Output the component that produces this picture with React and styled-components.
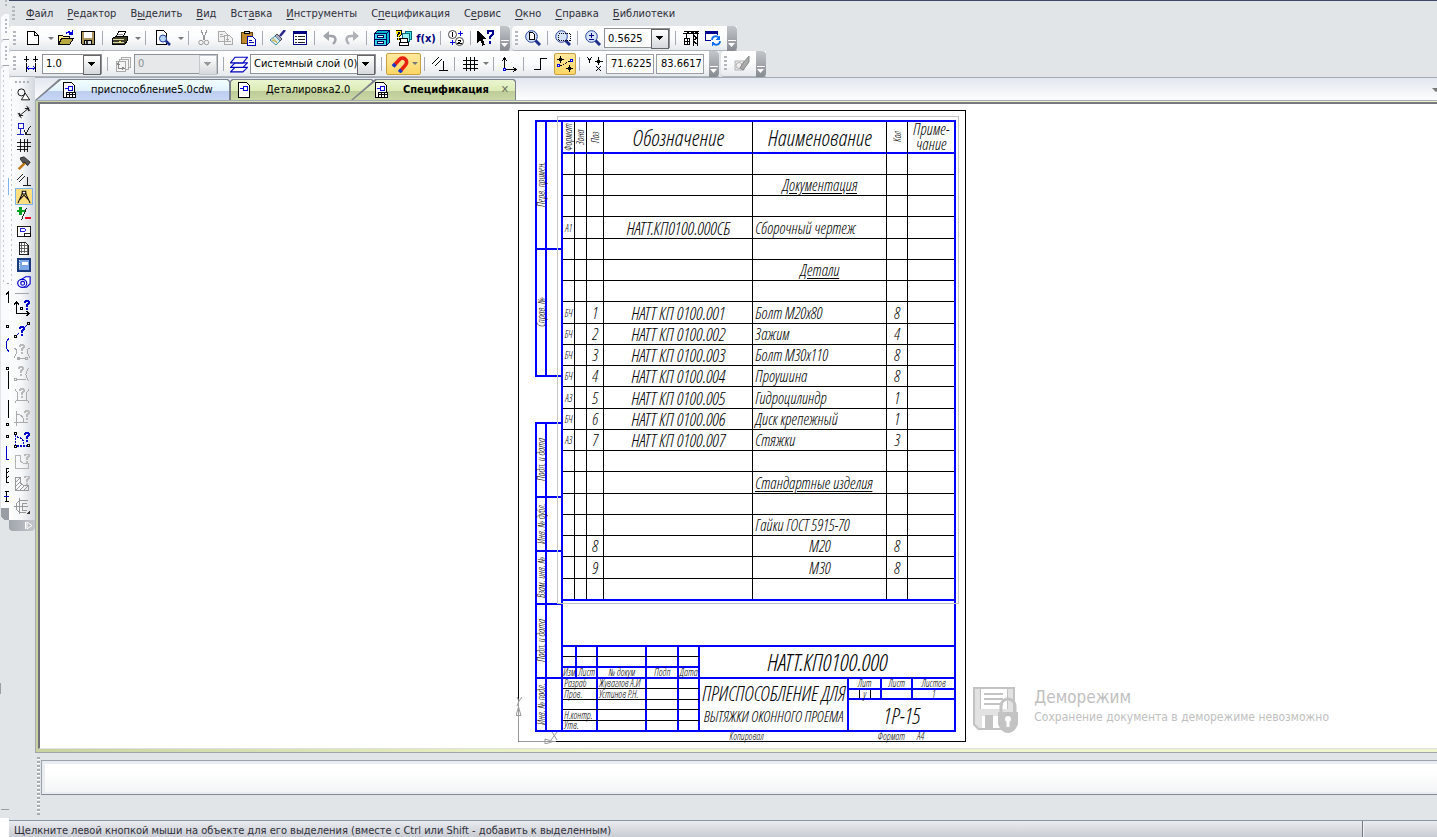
import React from 'react';
import styled, { createGlobalStyle, css } from 'styled-components';

const uiFont = '"DejaVu Sans Condensed", "DejaVu Sans", Tahoma, sans-serif';
const sheetFont = '"Open Sans Condensed Light", "Open Sans Condensed", "Liberation Sans Narrow", sans-serif';
const blue = '#0000ff';
const chrome = '#e1e5e8';

const GlobalStyle = createGlobalStyle`
  * { box-sizing: border-box; }
  body {
    margin: 0;
    background: ${chrome};
    font-family: ${uiFont};
    font-size: 11px;
    color: #2e2e38;
  }
  button, input, select { font: inherit; color: inherit; }
  button { padding: 0; border: 0; background: none; }
`;

const Window = styled.div`
  display: flex;
  min-height: 100vh;
  background: ${chrome};
`;

const Behind = styled.aside`
  flex: none;
  width: 9px;
  overflow: hidden;
  svg { display: block; }
`;

const Main = styled.div`
  flex: 1;
  min-width: 0;
  display: flex;
  flex-direction: column;
  border-top: 1px solid #3c4666;
`;

const Grip = styled.span`
  flex: none;
  width: 3px;
  height: 15px;
  margin: 0 4px 0 3px;
  background: repeating-linear-gradient(#b4b8be 0 2px, transparent 2px 4px);
`;

const MenuBar = styled.nav`
  display: flex;
  align-items: center;
  height: 25px;
`;

const MenuItem = styled.button`
  padding: 0 7px;
  line-height: 24px;
  u { text-underline-offset: 2px; }
`;

const ToolRow = styled.div`
  display: flex;
  gap: 2px;
  height: ${({ $tall }) => $tall ? 26 : 25}px;
`;

const ToolGroup = styled.div`
  display: flex;
  align-items: center;
  padding-left: ${({ $first }) => $first ? 1 : 0}px;
  border-bottom: 1px solid #b0b6be;
  border-radius: 4px 0 0 3px;
  background: linear-gradient(#fff, #fafbfc 50%, #e6e9ed);
`;

const ToolButton = styled.button`
  flex: none;
  display: flex;
  align-items: center;
  justify-content: center;
  width: ${({ $wide }) => $wide ? 26 : 22}px;
  height: 22px;
  ${({ $on }) => $on && css`
    border: 1px solid #c8a040;
    border-radius: 2px;
    background: linear-gradient(#ffe9a0, #ffd665);
  `}
`;

const MagnetButton = styled(ToolButton)`
  width: 35px;
  gap: 3px;
  justify-content: flex-end;
  padding-right: 2px;
`;

const Arrow = styled.i`
  flex: none;
  width: 0;
  border: 3px solid transparent;
  border-top-color: #777;
  border-bottom: 0;
`;

const DropButton = styled.button`
  flex: none;
  display: flex;
  justify-content: center;
  width: 9px;
`;

const Separator = styled.span`
  flex: none;
  width: 1px;
  height: 14px;
  margin: 0 4px 0 3px;
  background: #a4a9b2;
`;

const Handle = styled.span`
  flex: none;
  align-self: stretch;
  display: flex;
  align-items: flex-end;
  justify-content: center;
  width: 10px;
  margin: 0 0 -1px 3px;
  padding-bottom: 3px;
  border-radius: 0 4px 4px 0;
  background: linear-gradient(#c3c6ca, #868a91);
`;

const Combo = styled.span`
  flex: none;
  display: flex;
  width: ${({ $width }) => $width}px;
  height: 20px;
  margin-right: 2px;
  border: 1px solid #8d9299;
  background: ${({ $off }) => $off ? '#e6e8ea' : '#fff'};
  color: ${({ $off }) => $off ? '#8a8e94' : '#000'};
  position: relative;
  select {
    flex: 1;
    width: 100%;
    padding: 0 14px 0 3px;
    border: 0;
    background: none;
    color: inherit;
    opacity: 1;
    appearance: none;
  }
  &::after {
    content: '';
    position: absolute;
    right: 0;
    top: 0;
    width: 16px;
    height: 18px;
    border: 1px solid ${({ $off }) => $off ? '#c4c7cb' : '#666'};
    background:
      linear-gradient(${({ $off }) => $off ? '#999, #999' : '#000, #000'}) 4px 6px / 7px 1px no-repeat,
      linear-gradient(${({ $off }) => $off ? '#999, #999' : '#000, #000'}) 5px 7px / 5px 1px no-repeat,
      linear-gradient(${({ $off }) => $off ? '#999, #999' : '#000, #000'}) 6px 8px / 3px 1px no-repeat,
      linear-gradient(${({ $off }) => $off ? '#999, #999' : '#000, #000'}) 7px 9px / 1px 1px no-repeat,
      linear-gradient(#fff, #d5d8dc);
    pointer-events: none;
  }
`;

const Coord = styled.input`
  width: 48px;
  height: 20px;
  margin-right: 2px;
  padding: 0 2px 0 4px;
  border: 1px solid #9a9fa6;
  background: #fff;
  color: #000;
`;

const Body = styled.div`
  flex: 1;
  display: flex;
`;

const Palette = styled.div`
  flex: none;
  width: 26px;
`;

const PaletteTools = styled.div`
  display: flex;
  flex-direction: column;
  align-items: flex-end;
  padding: 9px 0 3px;
  border-radius: 4px 4px 0 0;
  background:
    repeating-linear-gradient(90deg, #b0b4ba 0 2px, transparent 2px 4px) 6px 4px / 14px 2px no-repeat,
    repeating-linear-gradient(#c4c7cc 0 2px, transparent 2px 5px) 2px 12px / 1px 196px no-repeat,
    linear-gradient(90deg, #fff, #f4f6f8 50%, #d3d8de);
  hr {
    width: 14px;
    margin: 3px 6px;
    border: 0;
    border-top: 1px solid #a0a5ad;
  }
`;

const PaletteButton = styled.button`
  display: flex;
  align-items: center;
  justify-content: center;
  width: ${({ $big }) => $big ? 25 : 21}px;
  height: ${({ $big }) => $big ? 22 : 17}px;
  padding-right: 2px;
  ${({ $on }) => $on && css`
    width: 18px;
    margin-right: 2px;
    padding: 0;
    border: 1px solid #7fb4ea;
    background: #ffdf80;
  `}
`;

const PaletteFoot = styled.div`
  height: 11px;
  padding-left: 15px;
  border-radius: 0 0 4px 4px;
  background: linear-gradient(90deg, #a0a4ab, #c4c8ce);
  svg { display: block; }
`;

const Work = styled.div`
  flex: 1;
  min-width: 0;
  display: flex;
  flex-direction: column;
`;

const TabRow = styled.div`
  display: flex;
  align-items: flex-end;
  height: 24px;
  border-top: 1px solid #a3aab4;
  border-bottom: 1px solid #a3aab4;
  background: linear-gradient(#e3e7ef, #fcfdfe);
  overflow: hidden;
  & > i { margin: 0 -3px 8px auto; border-width: 4px 4px 0; }
`;

const slant = 'polygon(24px 0, calc(100% - 2px) 0, 100% 2px, 100% 100%, 0 100%)';
const straight = 'polygon(2px 0, calc(100% - 2px) 0, 100% 2px, 100% 100%, 0 100%, 0 2px)';

const Tab = styled.button`
  position: relative;
  z-index: 0;
  flex: none;
  display: flex;
  align-items: center;
  width: ${({ $width }) => $width}px;
  height: 21px;
  margin-left: ${({ $over }) => $over || 0}px;
  padding: 0 7px 0 ${({ $pad }) => $pad}px;
  color: #000;
  font-weight: ${({ $active }) => $active ? 'bold' : 'normal'};
  svg { flex: none; margin-right: 14px; }
  span { margin-left: auto; color: #6d7364; font-weight: normal; }
  &::before, &::after {
    content: '';
    position: absolute;
    z-index: -1;
    inset: 0;
    background: #7c828b;
    clip-path: ${({ $slant }) => $slant ? slant : straight};
  }
  &::after {
    inset: 1px 1px 0 ${({ $slant }) => $slant ? 2 : 1}px;
    background: ${({ $green }) => $green
      ? 'linear-gradient(#eaf5d0, #dcebb4 55%, #bccb98 55%, #c9d8a4)'
      : 'linear-gradient(#f2ffff, #e2f2fd 55%, #bccdf0 55%, #c8d6f4)'};
  }
`;

const CanvasFrame = styled.div`
  flex: 1;
  display: flex;
  padding: 1px 0 3px 2px;
  border-left: 1px solid #a3aab4;
  border-bottom: 1px solid #a0a6ac;
  background: linear-gradient(90deg, #c8d3a0, #eef5cc 40%);
`;

const Canvas = styled.main`
  position: relative;
  flex: 1;
  display: flex;
  justify-content: center;
  align-items: flex-start;
  padding: 6px 0 6px 7px;
  border-left: 2px solid #707078;
  border-top: 2px solid #77777f;
  border-bottom: 1px solid #dfe0e4;
  background: #fff;
`;

const Sheet = styled.article`
  position: relative;
  width: 448px;
  padding: 9px 9px 0 16px;
  border: 1px solid #000;
  background: #fff;
  color: #000;
  font-family: ${sheetFont};
  font-style: italic;
  font-weight: 300;
`;

const Frame = styled.div`
  display: flex;
`;

const Strips = styled.div`
  flex: none;
  width: 26px;
`;

const Strip = styled.div`
  border-top: 2px solid ${blue};
  border-left: 2px solid ${blue};
  margin-bottom: 45px;
  &:last-child { margin-bottom: 0; }
`;

const StripCell = styled.div`
  display: flex;
  height: ${({ $height }) => $height}px;
  border-bottom: 2px solid ${blue};
  span {
    display: flex;
    align-items: center;
    justify-content: center;
    width: 10px;
    line-height: 8px;
    font-size: 10px;
    white-space: nowrap;
    writing-mode: vertical-rl;
    text-orientation: sideways;
    transform: rotate(180deg);
    border-left: 2px solid ${blue};
  }
`;

const Form = styled.div`
  flex: 1;
  border: 2px solid ${blue};
`;

const Spec = styled.table`
  width: 100%;
  table-layout: fixed;
  border-spacing: 0;
  font-size: 16px;
  border-bottom: 2px solid ${blue};
  th, td {
    padding: 0;
    line-height: 18px;
    white-space: nowrap;
    text-align: center;
    border-right: 1px solid #000;
    &:last-child { border-right: 0; }
  }
  th {
    height: 32px;
    font-weight: 300;
    border-bottom: 2px solid ${blue};
  }
  td {
    height: 21px;
    border-bottom: 1px solid #000;
  }
  tbody tr:nth-child(4n) td { height: 22px; }
  tbody tr:last-child td { height: 20px; border-bottom: 0; }
  td:first-child { font-size: 10px; }
  td:nth-child(4) { font-size: 18px; }
`;

const HeadText = styled.span`
  display: block;
  font-size: ${({ $big }) => $big ? 22 : 16}px;
  line-height: ${({ $big }) => $big ? 28 : 15}px;
`;

const Upright = styled.span`
  display: block;
  width: 11px;
  height: 30px;
  margin: 0 auto;
  font-size: 10px;
  line-height: 11px;
  text-align: center;
  writing-mode: vertical-rl;
  transform: rotate(180deg);
`;

const Name = styled.span`
  display: block;
  padding: 0 2px;
  text-align: ${({ $center }) => $center ? 'center' : 'left'};
  text-decoration: ${({ $under }) => $under ? 'underline' : 'none'};
  text-underline-offset: 2px;
`;

const Blank = styled.div`
  height: 44px;
`;

const Stamp = styled.div`
  display: flex;
  border-top: 2px solid ${blue};
`;

const Signatures = styled.table`
  width: 137px;
  table-layout: fixed;
  border-spacing: 0;
  td, th {
    height: 10px;
    padding: 0 0 0 1px;
    font-size: 10px;
    line-height: 9px;
    font-weight: 300;
    text-align: left;
    white-space: nowrap;
    border-right: 2px solid ${blue};
    border-bottom: 1px solid #000;
  }
  th { text-align: center; padding: 0; }
  tr.main td, tr.main th { height: 11px; border-bottom: 2px solid ${blue}; }
  tr.last td { height: 9px; border-bottom: 0; }
  tr.tall td { height: 11px; }
`;

const Titles = styled.div`
  flex: 1;
`;

const Code = styled.div`
  height: 32px;
  line-height: 30px;
  font-size: 24px;
  text-align: center;
  border-bottom: 2px solid ${blue};
`;

const TitleRow = styled.div`
  display: flex;
  height: 51px;
`;

const Title = styled.div`
  flex: none;
  width: 149px;
  padding-top: 4px;
  border-right: 2px solid ${blue};
  text-align: center;
  white-space: nowrap;
  line-height: 22px;
  font-size: 20px;
  small { display: block; font-size: 15px; }
`;

const SheetNo = styled.div`
  flex: 1;
  font-size: 22px;
  line-height: 31px;
  text-align: center;
`;

const Triple = styled.div`
  display: grid;
  grid-template-columns: 33px 31px 1fr;
  height: ${({ $low }) => $low ? 10 : 11}px;
  border-bottom: 2px solid ${blue};
  font-size: 10px;
  line-height: 9px;
  span { border-right: 2px solid ${blue}; }
  span:last-child { border-right: 0; }
  b {
    display: block;
    width: 12px;
    height: 8px;
    margin: 0 auto;
    border: 1px solid #000;
    border-width: 0 1px;
    font-weight: 300;
    line-height: 8px;
  }
`;

const SheetFoot = styled.footer`
  display: flex;
  justify-content: flex-end;
  height: 9px;
  padding-right: 32px;
  font-size: 10px;
  line-height: 9px;
  span { margin-left: 12px; }
  span:first-child { margin-right: 102px; }
`;

const PageOutline = styled.div`
  position: absolute;
  left: 38px;
  top: 5px;
  width: 402px;
  height: 488px;
  border: 1px solid #c6c6c6;
  pointer-events: none;
`;

const Axes = styled.svg`
  position: absolute;
  left: -3px;
  bottom: -3px;
`;

const Demo = styled.div`
  position: absolute;
  right: 108px;
  bottom: 15px;
  display: flex;
  align-items: flex-start;
  gap: 15px;
  color: #c0c0c0;
  font-size: 12px;
  line-height: 20px;
  strong { display: block; font-size: 17px; font-weight: normal; }
`;

const Properties = styled.div`
  display: flex;
  height: 67px;
  padding: 4px 0 5px 2px;
`;

const Dots = styled.span`
  width: 3px;
  margin-right: 1px;
  background: repeating-linear-gradient(#a8adb3 0 2px, #fff 2px 3px, transparent 3px 4px);
`;

const PropertyBox = styled.div`
  flex: 1;
  height: 35px;
  margin-top: 3px;
  border: 1px solid #9aa3ac;
  border-right: 0;
  border-bottom-color: #838a94;
  box-shadow: inset 3px 3px #e9edf1, inset 0 -2px #e9edf1;
  background: linear-gradient(#fff 30%, #f3f4f6);
`;

const StatusBar = styled.footer`
  display: flex;
  align-items: center;
  height: 17px;
  padding-left: 5px;
  border-top: 1px solid #8d96a6;
  background: linear-gradient(#e9ebef, #c9ccd2);
  white-space: nowrap;
  span { flex: 1; padding-top: 2px; }
  i { width: 75px; align-self: stretch; border-left: 1px solid #747a84; box-shadow: inset 1px 0 #eef0f3; }
`;

const Svg = ({ size = 16, children, ...rest }) => (
  <svg width={size} height={size} viewBox="0 0 16 16" fill="none" stroke="#000" shapeRendering="crispEdges" aria-hidden="true" {...rest}>
    {children}
  </svg>
);

const Lens = ({ children }) => (
  <>
    <path d="M10 10l5 5" stroke="#1c2f8c" strokeWidth="3" shapeRendering="auto" />
    <circle cx="6.5" cy="6.5" r="5.8" fill="#d4e2fa" stroke="#26409c" shapeRendering="auto" />
    {children}
  </>
);

const Question = ({ x = 0, y = 0, color = '#0000cc' }) => (
  <g transform={`translate(${x} ${y})`} fill={color} stroke="none">
    <path d="M0 1h1V0h4v1h1v3H5v1H4v2H2V4h1V3h1V2H2v1H0zM2 8h2v2H2z" />
  </g>
);

const icons = {
  newFile: <path d="M2.500 1.500h7l4 4v9h-11zM9.500 1.500v4h4" fill="#fff" />,
  open: <>
    <path d="M.500 14.500v-9h4l1 1h6v2" fill="#ffe98a" />
    <path d="M.500 14.500l3-6h12l-4 6z" fill="#b8a840" />
    <path d="M8 3.500c1-2 4-2 6 0M14.500 0v4h-4" stroke="#0000e0" strokeWidth="1.500" />
  </>,
  save: <><path d="M1.500 1.500h13v13h-12l-1-1z" fill="#a8945c" /><path d="M4 2h8v6H4z" fill="#fff" stroke="none" /><path d="M4.500 10.500h7v4h-7z" fill="#ddd" /><path d="M6 11h2v3H6z" fill="#333" stroke="none" /></>,
  print: <><path d="M4.500 6.500l2-5h7l-2 5" fill="#fff" /><path d="M6 4h5" stroke="#888" /><path d="M.500 8.500l3-2h12v4l-3 4h-12z" fill="#3c3c28" /><path d="M1 9.500h11M1 12.500h11" stroke="#d8d8a0" /><path d="M7 11h2" stroke="#ffe040" /></>,
  preview: <><path d="M1.500.500h7l3 3v11h-10z" fill="#fff" /><path d="M10 10l5 5" stroke="#1c2f8c" strokeWidth="2.500" shapeRendering="auto" /><circle cx="8" cy="8.500" r="3.500" fill="#b4d4fa" stroke="#26409c" shapeRendering="auto" /></>,
  cut: <><path d="M5 0l4 10M11 0L7 10" stroke="#999" /><circle cx="5" cy="12.500" r="2.200" stroke="#999" shapeRendering="auto" /><circle cx="10.500" cy="12.500" r="2.200" stroke="#999" shapeRendering="auto" /></>,
  copy: <g stroke="#aaa" fill="#f2f2f2"><path d="M.500 1.500h6l3 3v7h-9zM6.500 5.500h5l3 3v6h-8z" /><path d="M2 4h3M2 6h4M8 9h3M8 11h5" /></g>,
  paste: <><path d="M1.500 2.500h11v11h-11z" fill="#c08a2c" stroke="#60440c" /><path d="M4.500 3.500v-2h5v2z" fill="#ddd" /><path d="M7.500 6.500h5l3 3v6h-8z" fill="#fff" stroke="#0000b0" /><path d="M9 10h3M9 12h5" stroke="#0000b0" /></>,
  brush: <><path d="M10 6l5-6" stroke="#28288c" strokeWidth="2.500" shapeRendering="auto" /><path d="M7 4l5 5-2 2-5-5z" fill="#b0b0c0" stroke="#445" shapeRendering="auto" /><path d="M5 6l5 5-4 4-6-5z" fill="#d8ecf0" stroke="#4890a8" shapeRendering="auto" /><path d="M3 8l4 5M2 10l5 2" stroke="#c8b040" shapeRendering="auto" /></>,
  list: <><path d="M1.500 1.500h13v13h-13z" fill="#fff" stroke="#000080" /><path d="M1 2.500h14" stroke="#000080" strokeWidth="3" /><path d="M3 6.500h2M3 9.500h2M3 12.500h2M6 6.500h7M6 9.500h7M6 12.500h7" stroke="#222" /></>,
  undo: <g shapeRendering="auto"><path d="M4 6h5c5 0 6 4 2 8" stroke="#a0a4aa" strokeWidth="2.400" /><path d="M1 6l6-5v10z" fill="#a0a4aa" stroke="none" /></g>,
  redo: <g shapeRendering="auto"><path d="M12 6H7c-5 0-6 4-2 8" stroke="#aeb1b6" strokeWidth="2.400" /><path d="M15 6L9 1v10z" fill="#aeb1b6" stroke="none" /></g>,
  cabinet: <><path d="M.500 3.500l3-3h12v12l-3 3h-12z" fill="#00b8c8" stroke="#000060" /><path d="M.500 3.500h12v12H.500z" fill="#2cd8e8" stroke="#000060" /><path d="M12.500 3.500l3-3M1 9.500h11" stroke="#000060" /><path d="M3.500 5.500h6v2h-6zM3.500 11.500h6v2h-6z" fill="#fff" stroke="#000060" /></>,
  library: <><path d="M9.500 1.500h6v8h-6z" fill="#48e0e8" stroke="#006878" /><path d="M6.500 3.500h7v8h-7z" fill="#98f4f4" stroke="#006878" /><path d="M4.500 8.500h7v4h-7zM3.500 12.500h9v3h-9z" fill="#fff" /><path d="M1 4V1.500h3.500V4L2.500 5.500V7M2.500 8v2" stroke="#000" strokeWidth="3" /><path d="M1 4V1.500h3.500V4L2.500 5.500V7M2.500 8v2" stroke="#ffe800" strokeWidth="1.500" /></>,
  numbers: <><circle cx="4.500" cy="4.500" r="4" shapeRendering="auto" fill="#fff" stroke="#444" /><circle cx="11.500" cy="11.500" r="4" shapeRendering="auto" fill="#fff" stroke="#444" /><path d="M3.500 3.500l1-1V7M10 10h2.500v1.500L10 13.500h3.500" /><path d="M10 3h5M12.500 1v5M2 12.500h5M4 10v5" stroke="#0000e0" /></>,
  help: <><path d="M0 1v12l3-3 2 5 2-1-2-5h4z" fill="#000" stroke="none" /><path d="M9.500 4V2H14v3l-2.500 2v2M11.500 10.500V13" stroke="#000090" strokeWidth="2" /></>,
  zoomPage: <Lens><path d="M4.500 2.500h3l2 2v5h-5z" fill="#fff" /></Lens>,
  zoomArea: <Lens><path d="M3.500 3.500h12v7h-12z" strokeDasharray="1 1" /></Lens>,
  zoomFree: <Lens><path d="M6.500 2.500v5M4 5h5M4 9.500h5" stroke="#000080" /></Lens>,
  crane: <><path d="M0 3.500h16M1 1.500h15M10.500 2v14M14.500 2v14M3.500 4v4M10 5l4 3-4 3 4 3M4 1l2 3M8 1l2 3M12 1l2 3" /><path d="M1.500 8.500h5v6h-5zM1 11.500h6M4 9v6" fill="#fff" /></>,
  refresh: <><path d="M.500 1.500h12v9H.500z" fill="#fff" stroke="#000090" /><path d="M0 2h13" stroke="#000090" strokeWidth="3" /><circle cx="11" cy="10.500" r="5.500" fill="#fff" stroke="none" /><path d="M7 10c0-4 5-5 7-2M15 11c0 4-5 5-7 2" stroke="#1470f0" strokeWidth="1.800" shapeRendering="auto" /><path d="M15 5v5h-4zM7 16v-4l4 1z" fill="#1470f0" stroke="none" /></>,
  step: <><path d="M3.500 0v6M1 3h5M12.500 0v6M10 3h5M3.500 7v9M12.500 7v9" /><path d="M4 12h8M6 10l-2 2 2 2M10 10l2 2-2 2" stroke="#0000e0" /></>,
  state: <g stroke="#aaa" fill="#f4f4f4"><path d="M6.500 1.500h9v10h-9z" /><path d="M4.500 3.500h9v10h-9z" /><path d="M1.500 5.500h9v10h-9z" /><path d="M3.500 13V8M2 9l1.500-2L5 9M4 12.500h5M7 11l2 1.500L7 14" stroke="#888" fill="none" /></g>,
  layers: <g fill="#fff" stroke="#0000c0" shapeRendering="auto"><path d="M.500 15l4-4h11l-4 4z" /><path d="M.500 11l4-4h11l-4 4z" /><path d="M.500 7l4-5h11l-4 5z" /></g>,
  magnet: <g shapeRendering="auto"><path d="M3 9l4.500-5a3.600 3.600 0 0 1 5.500 4.800L8.500 14" stroke="#e82010" strokeWidth="3.200" /><path d="M1.800 10.300l2-2.200M7.300 15.300l2-2.200" stroke="#1838c8" strokeWidth="3.400" /></g>,
  ortho: <path d="M0 8l7-7M3 10l7-7M7 14.500h9M11.500 5v9" />,
  grid: <path d="M4.500 1v14M8.500 1v14M12.500 1v14M1 4.500h15M1 8.500h15M1 12.500h15" />,
  axes: <><path d="M3.500 12V2M1 5l2.500-3L6 5M5 13.500h10M12 11l3 2.500-3 2.500" /><path d="M2.500 12.500h2v2h-2z" fill="#fff" stroke="#0000e0" /></>,
  ladder: <path d="M1 13.500h6.500v-11H14" />,
  snap: <><path d="M3.500 0v7M0 3.500h7M3.500 2l2 1.500-2 2-2-2zM12.500 9v7M9 12.500h7M12.500 11l2 1.500-2 2-2-2z" /><path d="M3 10l10-5" strokeDasharray="2 1" /><path d="M.500 8.500h2v2h-2zM13.500 3.500h2v2h-2z" fill="#fff" stroke="#0000e0" /></>,
  coords: <path d="M0 1l2.500 3M5 1L2.500 4v3M11.500 1v8M8 5.500h8M11.500 4l1.500 1.500-1.500 1.500L10 5.500zM9 10l5 5M14 10l-5 5" />,
  edit: <g stroke="#b0b0b0" shapeRendering="auto"><path d="M1 5h9v9H1z" fill="#eee" /><circle cx="5" cy="9.500" r="3" /><path d="M15 0v6L9 14l-3-2 3-5z" fill="#aaa" stroke="#888" /></g>,

  geometry: <><circle cx="5" cy="5" r="4" shapeRendering="auto" /><path d="M5 13.500L9.500 6l5 7.500z" fill="#fff" shapeRendering="auto" /></>,
  size: <path d="M2 13L14 3M1 9l4 6M11 1l4 6M3 9v3h4M9 4h4v3" shapeRendering="auto" />,
  marks: <><path d="M1.500 1.500h6v6h-6zM4.500 8v6M0 14.500h8" stroke="#0000c0" /><path d="M8 9l2 5 5-9M9 14.500h7" /></>,
  hatch: <path d="M4.500 0v15M8.500 0v15M12.500 0v15M0 4.500h16M0 8.500h16M0 12.500h12" />,
  hammer: <g shapeRendering="auto"><path d="M2 15l8-8" stroke="#c07818" strokeWidth="3" /><path d="M4 2l4-1 7 6-3 4-3-4-2 1-3-4z" fill="#555" stroke="#222" /></g>,
  measure: <g shapeRendering="auto" strokeWidth="1.200"><path d="M1 15L6.500 3M15 15L9.500 3M3 11l5-5 5 5" /><path d="M6 1.500h4v3H6z" fill="#fff" /></g>,
  plusMinus: <><path d="M4 0v9M0 4.500h9" stroke="#00a020" strokeWidth="3" /><path d="M11 1L5 15" /><path d="M9 12.500h7" stroke="#e01020" strokeWidth="3" /></>,
  view: <><path d="M.500 2.500h15v12H.500zM9 10.500h6v4H9z" fill="#fff" /><path d="M3.500 5.500h6v3h-6z" stroke="#0000e0" /></>,
  page: <><path d="M2.500 1.500h7l4 4v10h-11z" fill="#fff" /><path d="M5.500 2v12M8.500 2v12M11.500 5v10M3 5.500h9M3 8.500h10M3 11.500h10" stroke="#555" /></>,
  book: <><path d="M1 1h14v14H1z" fill="#7ca8e8" stroke="#183880" strokeWidth="1.500" /><path d="M6 4h7v4H6z" fill="#fff" stroke="none" /><path d="M3 2v12" strokeDasharray="1 1" stroke="#fff" /></>,
  roll: <g stroke="#0000d0" strokeWidth="1.300" shapeRendering="auto"><path d="M5 5l5-3h5v8l-4 4H5z" fill="#fff" /><ellipse cx="6" cy="9.500" rx="5.200" ry="4.500" fill="#fff" /><circle cx="6.500" cy="9.500" r="2.200" /></g>,

  qAxes: <><path d="M2.500 14V3M0 5l2.500-3L5 5M2 13.500h12M12 11l3 2.500-3 2.500M6.500 7.500h2v2h-2z" strokeWidth="1.300" /><Question x={10} /></>,
  qLine: <><path d="M.500 13.500h2v2h-2zM13.500.500h2v2h-2z" strokeWidth="1.200" /><path d="M3 13l2-2M11 5l2-2" stroke="#0000c0" /><Question x={5} y={4} /></>,
  qArcs: <g stroke="#aaa"><path d="M0 4c4 1 3 6 0 10M16 4c-4 1-3 6 0 10M4 14.500h8M3 13.500h2v2H3zM11 13.500h2v2h-2z" /><Question x={5} color="#bbb" /></g>,
  qCurve: <g stroke="#aaa"><path d="M0 12.500h2v2H0zM3 13h9M15 2c-4 4-4 9 0 13" /><Question x={4} color="#bbb" /></g>,
  qPair: <g stroke="#aaa"><path d="M1 1c4 5 4 9 0 14M15 1c-4 5-4 9 0 14M3 12.500h10" /><Question x={5} color="#bbb" /></g>,
  qAngle: <g stroke="#aaa"><path d="M2.500 1v15M0 12.500h14M3 4c5 1 7 4 7 8" /><Question x={10} color="#bbb" /></g>,
  qArc: <><path d="M.500.500h2v2h-2zM.500 13.500h2v2h-2zM13.500 12.500h2v2h-2z" strokeWidth="1.200" /><path d="M1.500 3v10M3 14h10M3 5c4 0 7 3 7 8" stroke="#0000c0" strokeDasharray="2 1" strokeWidth="1.200" /><Question x={10} /></>,
  qShape: <g stroke="#b4b4b4"><path d="M1.500 1.500h5v4c0 4 3 4 8 4v5h-13z" /><Question x={10} y={-1} color="#bbb" /></g>,
  qHatch: <g stroke="#999"><path d="M1.500 1.500h5v4c0 4 3 4 8 4v5h-13zM2 6l4-4M2 10l5-5M2 14l6-6M6 14l5-5M10 14l4-4" /><Question x={10} y={-1} color="#bbb" /></g>,
  section: <><g stroke="#999"><path d="M14 2.500H5.500L2 6v5l3.500 3.500H12M0 8.500h14M13 5H8v7h5M5.500 0v16" /></g><path d="M16 12v4h-4z" fill="#333" stroke="none" /></>,
};

const Icon = ({ name, size }) => <Svg size={size}>{icons[name]}</Svg>;
const Tool = ({ name, label, on, wide, size }) => (
  <ToolButton aria-label={label} $on={on} $wide={wide}><Icon name={name} size={size} /></ToolButton>
);
const Drop = ({ label }) => <DropButton aria-label={label}><Arrow /></DropButton>;
const More = () => (
  <Handle><svg width="8" height="8" aria-hidden="true"><path d="M0 .500h8" stroke="#fff" /><path d="M0 3h7L3.500 7z" fill="#fff" /></svg></Handle>
);
const Select = ({ width, value, label, off }) => (
  <Combo $width={width} $off={off}>
    <select aria-label={label} defaultValue={value} disabled={off}><option>{value}</option></select>
  </Combo>
);
const Fx = styled.span`
  color: #00007c;
  font-size: 11px;
  font-weight: bold;
`;

const menu = [
  ['', 'Ф', 'айл'], ['', 'Р', 'едактор'], ['В', 'ы', 'делить'], ['', 'В', 'ид'], ['Вст', 'а', 'вка'], ['', 'И', 'нструменты'],
  ['С', 'п', 'ецификация'], ['С', 'е', 'рвис'], ['', 'О', 'кно'], ['', 'С', 'правка'], ['', 'Б', 'иблиотеки'],
];

const paletteTop = [
  ['geometry', 'Геометрия'], ['size', 'Размеры'], ['marks', 'Обозначения'], ['hatch', 'Обозначения для строительства'], ['hammer', 'Редактирование'],
  ['ortho', 'Параметризация'], ['measure', 'Измерения'], ['plusMinus', 'Выделение'], ['view', 'Виды'], ['page', 'Спецификация'],
  ['book', 'Отчеты'], ['roll', 'Вставки и макроэлементы'],
];

const paletteLow = [
  ['qAxes', 'Координаты точки'], ['qLine', 'Расстояние между точками'], ['qArcs', 'Расстояние на кривой'],
  ['qCurve', 'Расстояние до кривой'], ['qPair', 'Расстояние между кривыми'], ['qAngle', 'Угол'], ['qArc', 'Угол по трем точкам'],
  ['qShape', 'Длина кривой'], ['qHatch', 'Площадь'], ['section', 'МЦХ'],
];

const rows = [
  {},
  { name: 'Документация', center: true, under: true },
  {},
  { format: 'А1', code: 'НАТТ.КП0100.000СБ', name: 'Сборочный чертеж' },
  {},
  { name: 'Детали', center: true, under: true },
  {},
  { format: 'БЧ', pos: 1, code: 'НАТТ КП 0100.001', name: 'Болт М20х80', count: 8 },
  { format: 'БЧ', pos: 2, code: 'НАТТ КП 0100.002', name: 'Зажим', count: 4 },
  { format: 'БЧ', pos: 3, code: 'НАТТ КП 0100.003', name: 'Болт М30х110', count: 8 },
  { format: 'БЧ', pos: 4, code: 'НАТТ КП 0100.004', name: 'Проушина', count: 8 },
  { format: 'А3', pos: 5, code: 'НАТТ КП 0100.005', name: 'Гидроцилиндр', count: 1 },
  { format: 'БЧ', pos: 6, code: 'НАТТ КП 0100.006', name: 'Диск крепежный', count: 1 },
  { format: 'А3', pos: 7, code: 'НАТТ КП 0100.007', name: 'Стяжки', count: 3 },
  {},
  { name: 'Стандартные изделия', under: true },
  {},
  { name: 'Гайки ГОСТ 5915-70' },
  { pos: 8, name: 'М20', center: true, count: 8 },
  { pos: 9, name: 'М30', center: true, count: 8 },
  {},
];

const Cols = ({ widths }) => <colgroup>{widths.map((w, i) => <col key={i} width={w} />)}</colgroup>;

const SpecTable = () => (
  <Spec>
    <Cols widths={[12, 12, 17, 149, 134, 21, 46]} />
    <thead>
      <tr>
        <th><Upright>Формат</Upright></th>
        <th><Upright>Зона</Upright></th>
        <th><Upright>Поз</Upright></th>
        <th><HeadText $big>Обозначение</HeadText></th>
        <th><HeadText $big>Наименование</HeadText></th>
        <th><Upright>Кол</Upright></th>
        <th><HeadText>Приме-</HeadText><HeadText>чание</HeadText></th>
      </tr>
    </thead>
    <tbody>
      {rows.map(({ format, pos, code, name, center, under, count }, i) => (
        <tr key={i}>
          <td>{format}</td>
          <td />
          <td>{pos}</td>
          <td>{code}</td>
          <td>{name && <Name $center={center} $under={under}>{name}</Name>}</td>
          <td>{count}</td>
          <td />
        </tr>
      ))}
    </tbody>
  </Spec>
);

const TitleBlock = () => (
  <Stamp>
    <div>
      <Signatures>
        <Cols widths={[14, 21, 49, 32, 21]} />
        <tbody>
          <tr><td /><td /><td /><td /><td /></tr>
          <tr className="main"><td /><td /><td /><td /><td /></tr>
          <tr className="main"><th>Изм</th><th>Лист</th><th>№ докум</th><th>Подп</th><th>Дата</th></tr>
        </tbody>
      </Signatures>
      <Signatures>
        <Cols widths={[35, 49, 32, 21]} />
        <tbody>
          <tr><td>Разраб</td><td>Жуваглов А.И</td><td /><td /></tr>
          <tr className="tall"><td>Пров.</td><td>Устинов Р.Н.</td><td /><td /></tr>
          <tr><td /><td /><td /><td /></tr>
          <tr className="tall"><td>Н.контр.</td><td /><td /><td /></tr>
          <tr className="last"><td>Утв.</td><td /><td /><td /></tr>
        </tbody>
      </Signatures>
    </div>
    <Titles>
      <Code>НАТТ.КП0100.000</Code>
      <TitleRow>
        <Title>ПРИСПОСОБЛЕНИЕ ДЛЯ<small>ВЫТЯЖКИ ОКОННОГО ПРОЕМА</small></Title>
        <SheetNo>
          <Triple><span>Лит</span><span>Лист</span><span>Листов</span></Triple>
          <Triple $low><span><b>у</b></span><span /><span>1</span></Triple>
          1Р-15
        </SheetNo>
      </TitleRow>
    </Titles>
  </Stamp>
);

const Drawing = () => (
  <Sheet>
    <Frame>
      <Strips>
        <Strip>
          <StripCell $height={128}><span>Перв. примен.</span></StripCell>
          <StripCell $height={127}><span>Справ. №</span></StripCell>
        </Strip>
        <Strip>
          <StripCell $height={74}><span>Подп. и дата</span></StripCell>
          <StripCell $height={54}><span>Инв. № дубл.</span></StripCell>
          <StripCell $height={53}><span>Взам. инв. №</span></StripCell>
          <StripCell $height={74}><span>Подп. и дата</span></StripCell>
          <StripCell $height={53}><span>Инв. № подл.</span></StripCell>
        </Strip>
      </Strips>
      <Form>
        <SpecTable />
        <Blank />
        <TitleBlock />
      </Form>
    </Frame>
    <SheetFoot><span>Копировал</span><span>Формат</span><span>А4</span></SheetFoot>
    <PageOutline />
    <Axes width="44" height="48" fill="none" stroke="#999" aria-hidden="true">
      <path d="M2.500 5v40.500H40M0 19.500h5L2.500 11zM29 43l8 2.500-8 2.500zM1 1l2 4 3-4M3 5l-2 5M36 36l5 8M41 36l-6 8" />
    </Axes>
  </Sheet>
);

const DemoIcon = () => (
  <svg width="46" height="46" viewBox="0 0 46 46" aria-hidden="true">
    <path d="M0 0h42v43H5L0 38z" fill="#c3c3c3" />
    <path d="M2 2h5v20h28V2h5v24H2zM2 26h38v15H6l-4-4z" fill="#e2e2e2" />
    <path d="M8 2h26v20H8zM9 29h20v12H9z" fill="#fff" />
    <path d="M11 7h19M11 12h19M11 17h19M19 29h-6v11h6z" stroke="#c3c3c3" strokeWidth="2" fill="#c3c3c3" />
    <path d="M28 26v-7a7 7 0 0 1 14 0v7" fill="none" stroke="#c3c3c3" strokeWidth="3" />
    <path d="M25 25h20v12c-2 6-6 9-10 9s-8-3-10-9z" fill="#c3c3c3" />
    <circle cx="35" cy="32" r="3" fill="#fff" /><path d="M35 33v7" stroke="#fff" strokeWidth="3" />
  </svg>
);

const DocIcon = ({ table }) => (
  <Svg size={16}>
    <path d="M2.500.500h8l3 3v12h-11z" fill="#fff" />
    <path d="M4 6.500h3M7.500 4.500h4v4h-4z" stroke="#0000e0" />
    {table && <path d="M5.500 10.500h9v5h-9zM6 12.500h9M8.500 11v4M11.500 11v4" fill="#fff" />}
  </Svg>
);

// edge of the window that lies behind the main one
const BehindEdge = () => (
  <Behind aria-hidden="true">
    <svg width="9" height="837" fill="none" stroke="#000" shapeRendering="crispEdges">
      <path d="M9 14H4l-3 3v22H9zM9 40H4l-3 3v22H9zM9 66H4l-3 3v443H9z" fill="#fafbfc" stroke="none" />
      <path d="M5.500 0v8M5.500 19v16M5.500 46v16" stroke="#b4b8be" strokeWidth="2" strokeDasharray="2 2" />
      <path d="M3.500 70v212" stroke="#c4c7cc" strokeDasharray="2 3" />
      <path d="M8.500 178v17" stroke="#7fb4ea" />
      <path d="M3 39.500h6M3 65.500h6M7 283.500h2" stroke="#a0a5ad" />
      <path d="M8.500 291v12M6 295l2-3M6.500 325.500h2v2h-2zM6.500 367.500h2v2h-2zM8.500 371v18M8.500 400v18M6.500 423.500h2v2h-2zM6.500 435.500h2v2h-2zM6.500 468.500v14M6 468.500h3M6 482.500h3M7 473l2-2M7 478l2-2M6.500 491.500v10M5 491.500h4M5 501.500h4" />
      <path d="M9 338L6.500 342v6L9 352M6.500 445.500v14h3M4 496.500h5" stroke="#0000d0" />
      <path d="M1 508h8v12H4l-3-3z" fill="#999da4" stroke="none" />
      <path d="M1 809.500h8M.500 683v11" stroke="#9a9fa6" />
      <path d="M0 818h9v19H0z" fill="#fff" stroke="none" />
    </svg>
  </Behind>
);

const App = () => (
  <Window>
    <GlobalStyle />
    <BehindEdge />
    <Main>
      <MenuBar>
        <Grip />
        {menu.map(([before, key, after]) => (
          <MenuItem key={key + after}>{before}<u>{key}</u>{after}</MenuItem>
        ))}
      </MenuBar>
      <ToolRow>
        <ToolGroup $first>
          <Grip />
          <Tool name="newFile" label="Создать" wide /><Drop label="Вид документа" />
          <Tool name="open" label="Открыть" /><Tool name="save" label="Сохранить" />
          <Separator />
          <Tool name="print" label="Печать" wide /><Drop label="Настройка печати" />
          <Separator />
          <Tool name="preview" label="Просмотр" wide /><Drop label="Режим просмотра" />
          <Separator />
          <Tool name="cut" label="Вырезать" /><Tool name="copy" label="Копировать" /><Tool name="paste" label="Вставить" />
          <Separator />
          <Tool name="brush" label="Копировать свойства" /><Tool name="list" label="Свойства" />
          <Separator />
          <Tool name="undo" label="Отменить" /><Tool name="redo" label="Повторить" />
          <Separator />
          <Tool name="cabinet" label="Менеджер библиотек" /><Tool name="library" label="Менеджер документа" />
          <ToolButton aria-label="Переменные"><Fx>f(x)</Fx></ToolButton>
          <Separator />
          <Tool name="numbers" label="Перенумеровать" />
          <Separator />
          <Tool name="help" label="Справка" size={18} />
          <More />
        </ToolGroup>
        <ToolGroup>
          <Grip />
          <Tool name="zoomPage" label="Показать все" /><Separator />
          <Tool name="zoomArea" label="Увеличить рамкой" /><Separator />
          <Tool name="zoomFree" label="Приблизить" />
          <Select width={66} value="0.5625" label="Масштаб" />
          <Separator />
          <Tool name="crane" label="Строительство" /><Tool name="refresh" label="Обновить изображение" />
          <More />
        </ToolGroup>
      </ToolRow>
      <ToolRow $tall>
        <ToolGroup $first>
          <Grip />
          <Tool name="step" label="Шаг курсора" />
          <Select width={60} value="1.0" label="Шаг" />
          <Separator />
          <Tool name="state" label="Состояния видов" />
          <Select width={84} value="0" label="Вид" off />
          <Separator />
          <Tool name="layers" label="Состояния слоев" size={18} />
          <Select width={126} value="Системный слой (0)" label="Слой" />
          <Separator />
          <MagnetButton $on aria-label="Привязки"><Icon name="magnet" size={18} /><Arrow /></MagnetButton>
          <Separator />
          <Tool name="ortho" label="Ограничения" />
          <Separator />
          <Tool name="grid" label="Сетка" /><Drop label="Настройка сетки" />
          <Separator />
          <Tool name="axes" label="Локальная система координат" />
          <Separator />
          <Tool name="ladder" label="Ортогональное черчение" wide />
          <Tool name="snap" label="Округление" on />
          <Separator />
          <Tool name="coords" label="Координаты" />
          <Coord aria-label="Координата X" defaultValue="71.6225" />
          <Coord aria-label="Координата Y" defaultValue="83.6617" />
          <More />
        </ToolGroup>
        <ToolGroup>
          <Grip />
          <Tool name="edit" label="Редактировать" />
          <More />
        </ToolGroup>
      </ToolRow>
      <Body>
        <Palette>
          <PaletteTools>
            {paletteTop.map(([name, label]) => (
              <PaletteButton key={name} aria-label={label} $on={name === 'measure'}><Icon name={name} size={14} /></PaletteButton>
            ))}
            <hr />
            {paletteLow.map(([name, label]) => (
              <PaletteButton key={name} aria-label={label} $big><Icon name={name} /></PaletteButton>
            ))}
          </PaletteTools>
          <PaletteFoot><svg width="9" height="11" aria-hidden="true"><path d="M1.500 2v7M3 2l5 3.500L3 9z" stroke="#fff" fill="none" /></svg></PaletteFoot>
        </Palette>
        <Work>
          <TabRow>
            <Tab $slant $width={195} $pad={26}><DocIcon table />приспособление5.0cdw</Tab>
            <Tab $green $width={144} $pad={6}><DocIcon />Деталировка2.0</Tab>
            <Tab $slant $green $active $over={-23} $width={165} $pad={22}><DocIcon table />Спецификация<span>✕</span></Tab>
            <Arrow />
          </TabRow>
          <CanvasFrame>
            <Canvas>
              <Drawing />
              <Demo>
                <DemoIcon />
                <div><strong>Деморежим</strong>Сохранение документа в деморежиме невозможно</div>
              </Demo>
            </Canvas>
          </CanvasFrame>
          <Properties>
            <Dots />
            <PropertyBox />
          </Properties>
        </Work>
      </Body>
      <StatusBar>
        <span>Щелкните левой кнопкой мыши на объекте для его выделения (вместе с Ctrl или Shift - добавить к выделенным)</span>
        <i />
      </StatusBar>
    </Main>
  </Window>
);

export default App;
